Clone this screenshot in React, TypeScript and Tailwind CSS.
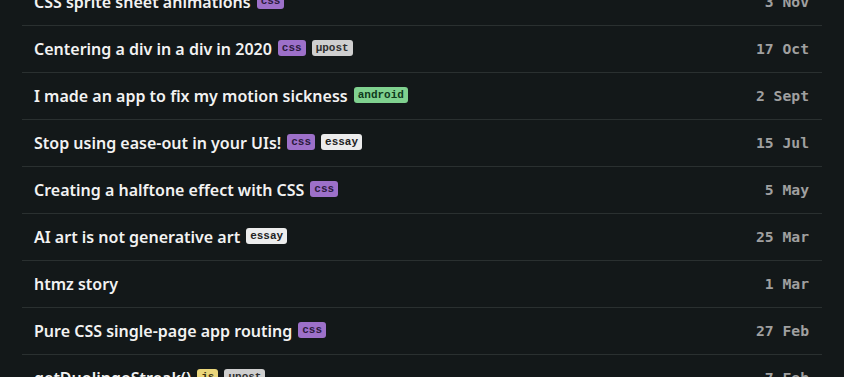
import React from 'react';

type Tag = 'css' | 'µpost' | 'android' | 'essay' | 'js';

const tagStyles: Record<Tag, string> = {
    css: 'bg-[#9d70c9] text-[#2b1a3d]',
    'µpost': 'bg-[#cfcfcf] text-[#2e2e2e]',
    android: 'bg-[#7fd18f] text-[#0f3a1c]',
    essay: 'bg-[#ececec] text-[#222222]',
    js: 'bg-[#ead67b] text-[#3a3210]',
};

const posts: { title: string; tags: Tag[]; date: string }[] = [
    { title: 'CSS sprite sheet animations', tags: ['css'], date: '3 Nov' },
    { title: 'Centering a div in a div in 2020', tags: ['css', 'µpost'], date: '17 Oct' },
    { title: 'I made an app to fix my motion sickness', tags: ['android'], date: '2 Sept' },
    { title: 'Stop using ease-out in your UIs!', tags: ['css', 'essay'], date: '15 Jul' },
    { title: 'Creating a halftone effect with CSS', tags: ['css'], date: '5 May' },
    { title: 'AI art is not generative art', tags: ['essay'], date: '25 Mar' },
    { title: 'htmz story', tags: [], date: '1 Mar' },
    { title: 'Pure CSS single-page app routing', tags: ['css'], date: '27 Feb' },
    { title: 'getDuolingoStreak()', tags: ['js', 'µpost'], date: '7 Feb' },
];

const App: React.FC = () => {
    return (
        <div className='w-full h-[377px] overflow-hidden bg-[#131819]'>
            <ul className='w-[800px] mx-auto -mt-[21px]'>
                {posts.map((p, i) => (
                    <li key={i} className='flex items-center justify-between h-[47px] pl-3 pr-[13px] border-b border-[#2a3030]'>
                        <div className='flex items-center gap-[6px]'>
                            <span className="text-[16px] font-semibold text-[#f2f2f2] font-['Noto_Sans',sans-serif]">{p.title}</span>
                            {p.tags.map((t) => (
                                <span key={t} className={`rounded-[3px] px-1 h-4 leading-4 -mt-[2px] text-[11px] font-semibold font-['Liberation_Mono',monospace] ${tagStyles[t]}`}>{t}</span>
                            ))}
                        </div>
                        <span className="text-[14.7px] font-bold text-[#a0a0a0] font-['DejaVu_Sans_Mono',monospace]">{p.date}</span>
                    </li>
                ))}
            </ul>
        </div>
    );
};

export default App;
